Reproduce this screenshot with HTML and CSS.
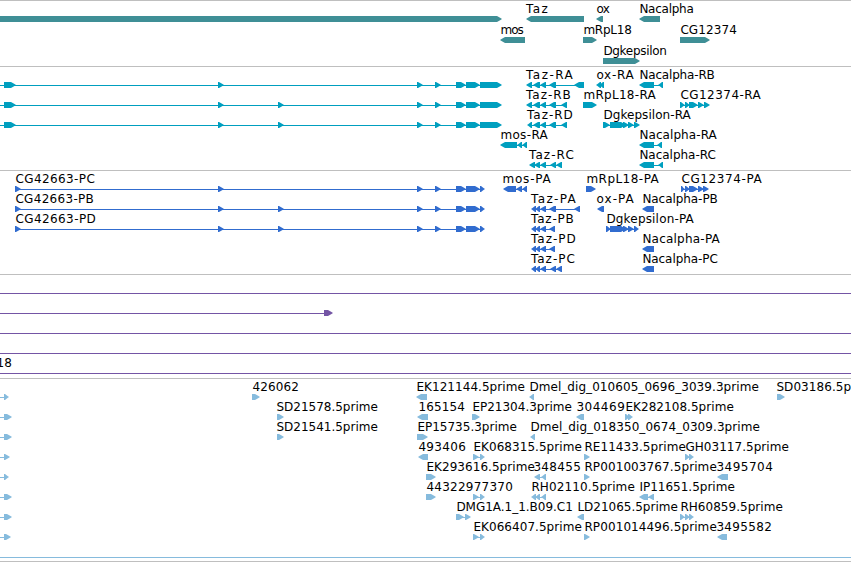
FILE: index.html
```
<!DOCTYPE html>
<html>
<head>
<meta charset="UTF-8">
<title>Genome Browser</title>

<link rel="stylesheet" href="styles.css">
</head>

<body>

<div id="browser">
  <section class="track genes"></section>
  <section class="track transcripts"></section>
  <section class="track proteins"></section>
  <section class="track clones"></section>
  <section class="track ests"></section>
  <div class="trackEnd"></div>
</div>

<script src="tracks.js"></script>

</body>
</html>
```
FILE: styles.css
```
body{
  margin:0;
  background:#fff;
  overflow:hidden;
}

#browser{
  width:851px;
}

.track{
  box-sizing:border-box;
  height:104px;
  border-top:1px solid #bfbfbf;
}

.trackEnd{
  height:1px;
  background:#bfbfbf;
}

.row{
  display:block;
  width:851px;
  height:20px;
  overflow:visible;
  fill:currentColor;
}

.row text{
  font-family:"DejaVu Sans", sans-serif;
  font-size:12px;
  fill:#000;
}

.genes{
  height:66px;
  color:#3f8f96;
}

.genes .row{ height:21px; }

.transcripts{ color:#009fbf; }

.proteins{ color:#316ccf; }

.clones{ color:#7455a5; }

.ests{
  height:183px;
  color:#86bbdd;
}
```
FILE: tracks.js
```
// feature: [strand, blocks, label, label start, label end]
// blocks are [start, end] pairs, joined by a thin line
var long1 = [[218,224],[417,423],[435,441],[456,466],[466,480]];
var long2 = [[218,224],[278,284],[417,423],[435,441],[456,466],[466,480]];
var rna1 = [[-20,-10],[4,16]].concat(long1, [[480,502]]);
var rna2 = [[-20,-10],[4,16]].concat(long2, [[480,502]]);
var cds1 = [[15,21]].concat(long1, [[480,485]]);
var cds2 = [[15,21]].concat(long2, [[480,485]]);
var whole = [[-20,-10],[860,870]];

function edge(end){
  return ["+", [[-20,-10],[4,end]]];
}

var tracks = {
  genes: [
    [["+",[[-20,502]]], ["-",[[526,584]],"Taz",526,547], ["-",[[596,603]],"ox",597,609], ["-",[[639,660]],"Nacalpha",640,693]],
    [["-",[[500,525]],"mos",501,523], ["+",[[583,597]],"mRpL18",584,631], ["+",[[680,710]],"CG12374",681,736]],
    [["+",[[603,640]],"Dgkepsilon",604,666]]
  ],
  transcripts: [
    [["+",rna1], ["-",[[526,532],[533,540],[540,546],[549,556],[574,584]],"Taz-RA",526,572],
     ["-",[[596,601],[599,604]],"ox-RA",597,633], ["-",[[639,654],[658,663]],"Nacalpha-RB",640,714]],
    [["+",rna2], ["-",[[526,532],[533,540],[540,546],[549,556],[561,567]],"Taz-RB",526,570],
     ["+",[[583,597]],"mRpL18-RA",584,655], ["+",[[680,685],[685,690],[689,698],[698,704],[704,710]],"CG12374-RA",681,760]],
    [["+",rna2], ["-",[[527,532],[533,540],[540,546],[549,556],[561,567]],"Taz-RD",527,572],
     ["+",[[603,610],[610,626],[623,629],[628,634],[634,640]],"Dgkepsilon-RA",604,690]],
    [["-",[[500,517],[517,522],[522,527]],"mos-RA",501,547], ["-",[[639,654],[657,662]],"Nacalpha-RA",640,716]],
    [["-",[[529,535],[534,540],[540,546],[550,556],[556,562]],"Taz-RC",529,573], ["-",[[639,654],[658,663]],"Nacalpha-RC",640,715]]
  ],
  proteins: [
    [["+",cds1,"CG42663-PC",16,94], ["-",[[503,516],[516,522],[522,527]],"mos-PA",503,550],
     ["+",[[586,596]],"mRpL18-PA",587,658], ["+",[[681,685],[685,690],[689,698],[698,704],[703,709]],"CG12374-PA",682,761]],
    [["+",cds2,"CG42663-PB",16,93], ["-",[[531,536],[535,540],[540,546],[549,556],[574,580]],"Taz-PA",531,575],
     ["-",[[597,604]],"ox-PA",597,633], ["-",[[642,654]],"Nacalpha-PB",643,717]],
    [["+",cds2,"CG42663-PD",16,95], ["-",[[531,536],[535,540],[540,546],[549,555]],"Taz-PB",531,573],
     ["+",[[606,611],[610,626],[623,629],[628,634],[634,639]],"Dgkepsilon-PA",607,693]],
    [["-",[[531,536],[535,540],[540,546],[549,555]],"Taz-PD",531,575], ["-",[[642,654]],"Nacalpha-PA",643,719]],
    [["-",[[531,536],[535,540],[540,546],[550,556],[556,562]],"Taz-PC",531,574], ["-",[[642,654]],"Nacalpha-PC",643,717]]
  ],
  clones: [
    [["+",whole]],
    [["+",[[-20,-10],[324,333]]]],
    [["+",whole]],
    [["+",whole]],
    [["+",whole,"18",-3,11]]
  ],
  ests: [
    [edge(9), ["+",[[252,260]],"426062",253,298], ["-",[[416,427]],"EK121144.5prime",417,524],
     ["-",[[529,534]],"Dmel_dig_010605_0696_3039.3prime",530,758], ["+",[[777,785]],"SD03186.5prime",777,878]],
    [edge(12), ["+",[[277,284]],"SD21578.5prime",277,377], ["-",[[417,428]],"165154",419,464],
     ["+",[[472,480]],"EP21304.3prime",473,571], ["-",[[576,584]],"304469",577,624], ["+",[[625,630],[628,633]],"EK282108.5prime",626,733]],
    [edge(12), ["+",[[277,284]],"SD21541.5prime",277,377], ["+",[[417,428]],"EP15735.3prime",418,516],
     ["-",[[530,535]],"Dmel_dig_018350_0674_0309.3prime",531,759]],
    [edge(10), ["-",[[418,428]],"493406",419,465], ["+",[[473,479],[480,485]],"EK068315.5prime",474,581],
     ["+",[[584,590]],"RE11433.5prime",585,685], ["+",[[685,690],[689,694]],"GH03117.5prime",686,788]],
    [edge(9), ["+",[[426,436]],"EK293616.5prime",427,534], ["-",[[534,540],[541,546]],"348455",534,580],
     ["+",[[584,590]],"RP001003767.5prime",585,716], ["-",[[717,728]],"3495704",717,772]],
    [edge(12), ["+",[[426,436]],"44322977370",427,512], ["+",[[473,479],[480,485]]],
     ["-",[[531,536],[535,540],[541,546]],"RH02110.5prime",532,634], ["-",[[639,648],[648,654]],"IP11651.5prime",640,734]],
    [edge(12), ["+",[[456,464],[465,471]],"DMG1A.1_1.B09.C1",457,572], ["-",[[577,584]],"LD21065.5prime",578,677],
     ["+",[[680,685],[685,690],[689,694]],"RH60859.5prime",681,782]],
    [edge(11), ["+",[[473,479],[480,485]],"EK066407.5prime",474,581], ["+",[[584,590]],"RP001014496.5prime",585,716],
     ["-",[[717,727]],"3495582",717,771]],
    [["+",whole]]
  ]
};

// box with a blunt arrow head at the end it points to
function block(strand, a, b){
  var tail = strand == "+" ? a : b;
  var tip = strand == "+" ? b : a;
  var dir = strand == "+" ? 1 : -1;
  var neck = tip - dir * Math.min(5, b - a - 1);

  return '<path d="M' + tail + ' 15H' + neck + 'L' + (tip - dir * 1.5) + ' 17L' + tip + ' 18L' +
    (tip - dir * 1.5) + ' 19L' + neck + ' 21H' + tail + 'z"/>';
}

function feature(f){
  var blocks = f[1];
  var start = blocks[0][0];
  var end = blocks[blocks.length - 1][1];
  var out = "";

  if(blocks.length > 1){
    out += '<rect x="' + (start + 2) + '" y="18" width="' + (end - start - 4) + '" height="1"/>';
  }
  for(var i=0;i<blocks.length;i++){
    out += block(f[0], blocks[i][0], blocks[i][1]);
  }
  if(f[2]){
    // T has no side bearing
    var pad = f[2].charAt(0) == "T" ? 0 : 0.6;
    out += '<text x="' + (f[3] - pad) + '" y="12" textLength="' + (f[4] - f[3] + pad + 0.8) + '">' + f[2] + '</text>';
  }
  return out;
}

for(var name in tracks){
  var html = "";
  for(var r=0;r<tracks[name].length;r++){
    html += '<svg class="row">' + tracks[name][r].map(feature).join("") + '</svg>';
  }
  document.querySelector("." + name).innerHTML = html;
}
```
